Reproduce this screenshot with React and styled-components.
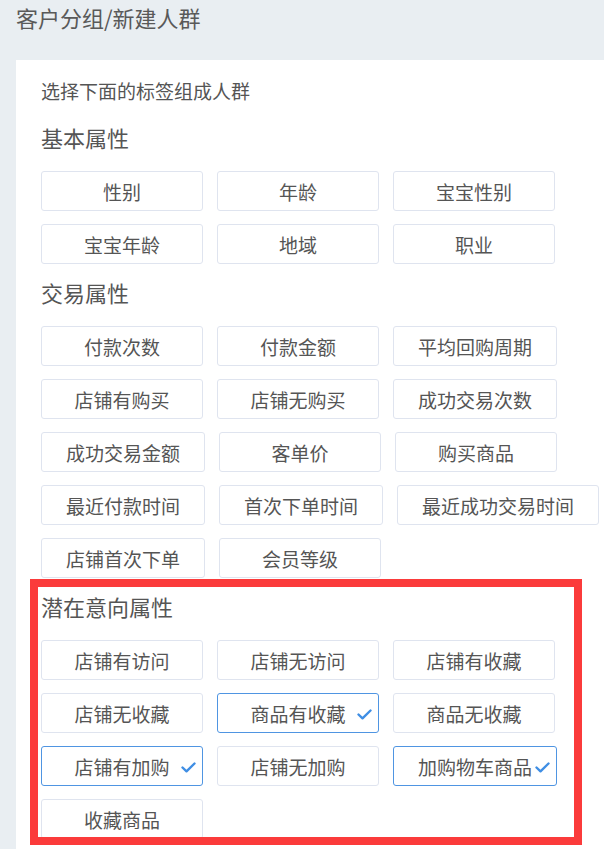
import React from "react";
import styled, { createGlobalStyle } from "styled-components";

const GlobalStyle = createGlobalStyle`
  html, body {
    margin: 0;
    padding: 0;
    overflow: hidden;
    background: #e9eef2;
    font-family: "Noto Sans CJK SC", "Noto Sans", sans-serif;
    color: #555;
  }
`;

const Page = styled.div`
  padding-left: 16px;
`;

const Title = styled.h1`
  margin: 0;
  height: 60px;
  line-height: 35px;
  font-size: 22px;
  font-weight: normal;
  color: #595959;
`;

const Panel = styled.div`
  background: #fff;
  padding: 18px 0 40px 25px;
`;

const Hint = styled.div`
  font-size: 19px;
  line-height: 26px;
  margin-bottom: 17px;
`;

const Group = styled.section`
  position: relative;
  display: flow-root;
`;

const Heading = styled.h2`
  margin: ${(p) => (p.$first ? "0" : "12px")} 0 18px;
  font-size: 22px;
  line-height: 32px;
  font-weight: normal;
  color: #555;
`;

const TagList = styled.div`
  display: flex;
  flex-wrap: wrap;
  gap: 13px 14px;
`;

const Tag = styled.button`
  position: relative;
  box-sizing: border-box;
  height: 40px;
  min-width: 162px;
  padding: 0 24px;
  display: inline-flex;
  align-items: center;
  justify-content: center;
  background: #fff;
  border: 1px solid ${(p) => (p.$selected ? "#4f95e2" : "#dfe4ef")};
  border-radius: 3px;
  font-family: inherit;
  font-size: 19px;
  color: #555;
  cursor: pointer;
  white-space: nowrap;
`;

const Check = styled.svg`
  position: absolute;
  right: 6px;
  top: 50%;
  margin-top: -4px;
`;

// 截图上的红色标注框，盖在内容上面
const Highlight = styled.div`
  position: absolute;
  left: -11px;
  top: 1px;
  width: 552px;
  height: 266px;
  box-sizing: border-box;
  border: 8px solid #fb3b3b;
  pointer-events: none;
`;

const groups = [
  {
    name: "基本属性",
    tags: ["性别", "年龄", "宝宝性别", "宝宝年龄", "地域", "职业"],
  },
  {
    name: "交易属性",
    tags: [
      "付款次数",
      "付款金额",
      "平均回购周期",
      "店铺有购买",
      "店铺无购买",
      "成功交易次数",
      "成功交易金额",
      "客单价",
      "购买商品",
      "最近付款时间",
      "首次下单时间",
      "最近成功交易时间",
      "店铺首次下单",
      "会员等级",
    ],
  },
  {
    name: "潜在意向属性",
    marked: true,
    tags: [
      "店铺有访问",
      "店铺无访问",
      "店铺有收藏",
      "店铺无收藏",
      "商品有收藏",
      "商品无收藏",
      "店铺有加购",
      "店铺无加购",
      "加购物车商品",
      "收藏商品",
    ],
  },
];

const selected = ["商品有收藏", "店铺有加购", "加购物车商品"];

const CheckIcon = () => (
  <Check width="15" height="11" viewBox="0 0 15 11">
    <path
      d="M1.5 5.5 L5.5 9.3 L13.5 1.5"
      fill="none"
      stroke="#3f8ee4"
      strokeWidth="2.4"
      strokeLinecap="round"
      strokeLinejoin="round"
    />
  </Check>
);

const App = () => {
  return (
    <Page>
      <GlobalStyle />
      <Title>客户分组/新建人群</Title>
      <Panel>
        <Hint>选择下面的标签组成人群</Hint>
        {groups.map((g, i) => (
          <Group key={g.name}>
            <Heading $first={i === 0}>{g.name}</Heading>
            <TagList>
              {g.tags.map((t) => {
                const on = selected.includes(t);
                return (
                  <Tag key={t} $selected={on}>
                    {t}
                    {on && <CheckIcon />}
                  </Tag>
                );
              })}
            </TagList>
            {g.marked && <Highlight />}
          </Group>
        ))}
      </Panel>
    </Page>
  );
};

export default App;
